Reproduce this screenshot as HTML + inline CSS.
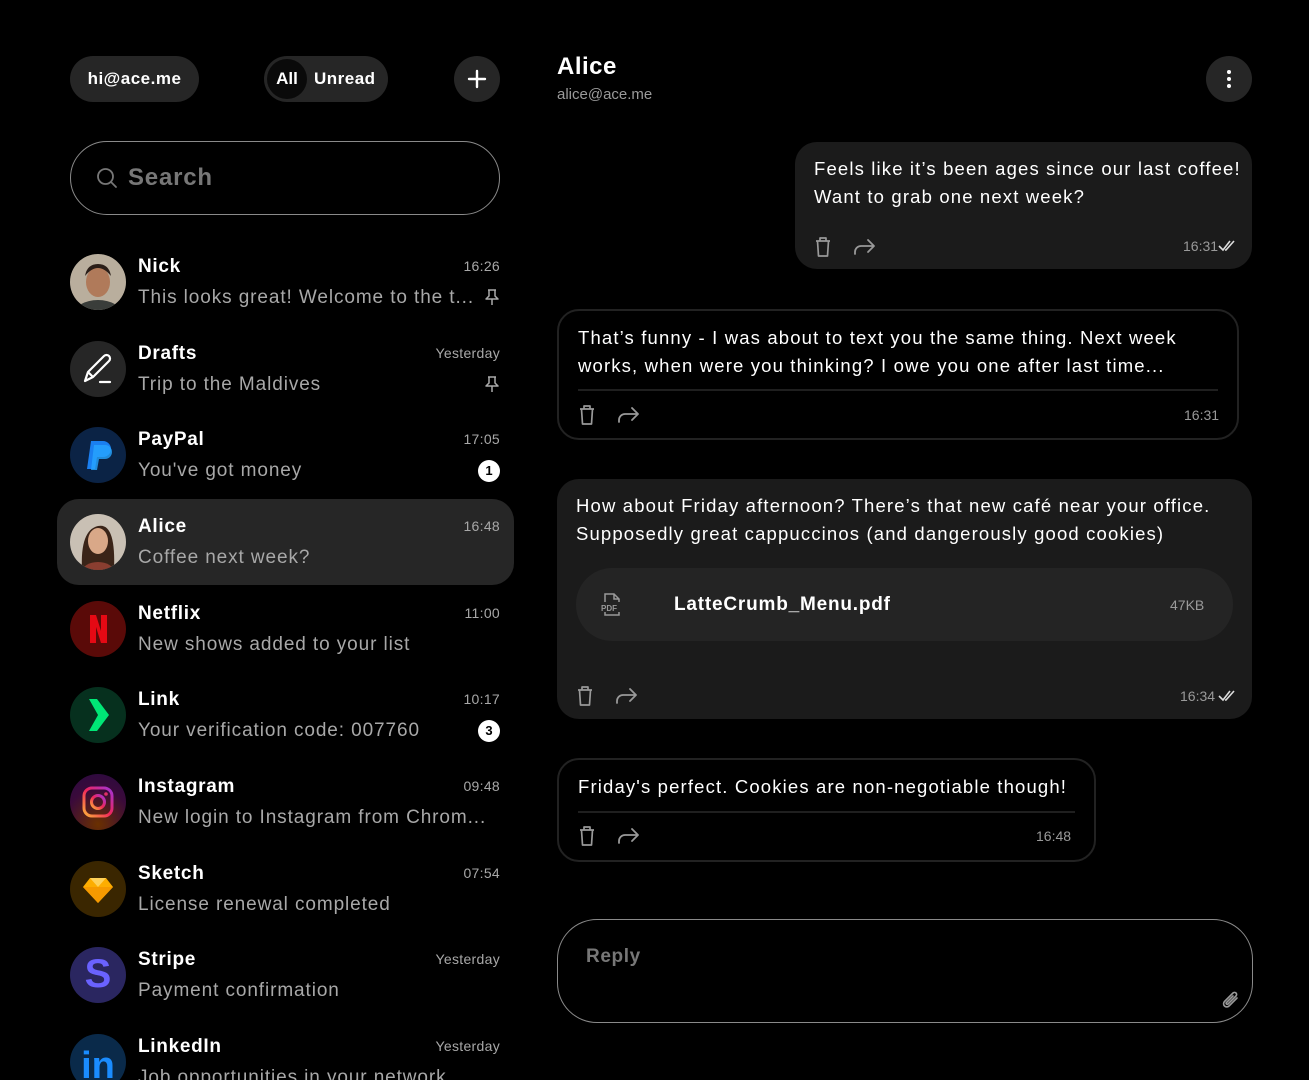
<!DOCTYPE html>
<html style="height:1080px;overflow:hidden"><head><meta charset="utf-8">
<style>
*{margin:0;padding:0;box-sizing:border-box}
body{width:1309px;height:1080px;background:#000;overflow:hidden;position:relative;font-family:"Liberation Sans",sans-serif;color:#fff}
.abs{position:absolute}
.pill{position:absolute;background:#262626;border-radius:23px;height:46px}
.row{position:absolute;left:70px;width:430px;height:60px}
.av{position:absolute;left:0;top:0;width:56px;height:56px;border-radius:50%;overflow:hidden}
.nm{position:absolute;left:68px;top:1px;line-height:24px;font-size:19px;font-weight:bold;color:#fff;letter-spacing:0.7px}
.pv{position:absolute;left:68px;top:32px;line-height:24px;font-size:19px;color:#a8a8a8;white-space:nowrap;letter-spacing:0.9px}
.tm{position:absolute;right:0;top:1px;line-height:22px;font-size:14px;color:#a8a8a8;letter-spacing:0.3px}
.badge{position:absolute;right:0;top:33px;width:22px;height:22px;border-radius:50%;background:#fff;color:#000;font-size:13px;font-weight:bold;text-align:center;line-height:22px}
.pin{position:absolute;right:0;top:34px}
.msg{position:absolute;font-size:18.5px;line-height:28px;color:#fff;letter-spacing:1.15px;white-space:nowrap}
.bub{position:absolute;border-radius:22px}
.ic{position:absolute}
.time{position:absolute;font-size:14px;color:#9a9a9a;line-height:20px}
.div{position:absolute;height:2px;background:#1f1f1f}
</style></head><body>

<div class="pill" style="left:70px;top:56px;width:129px;font-size:17px;font-weight:bold;line-height:46px;text-align:center;letter-spacing:0.5px">hi@ace.me</div>
<div class="pill" style="left:264px;top:56px;width:124px"></div>
<div class="abs" style="left:267px;top:59px;width:40px;height:40px;border-radius:50%;background:#0a0a0a;font-size:17px;font-weight:bold;line-height:40px;text-align:center">All</div>
<div class="abs" style="left:314px;top:56px;font-size:17px;font-weight:bold;line-height:46px;letter-spacing:0.5px">Unread</div>
<div class="pill" style="left:454px;top:56px;width:46px;border-radius:50%"></div>
<svg class="abs" style="left:467px;top:69px" width="20" height="20" viewBox="0 0 20 20"><path d="M10 2v16M2 10h16" stroke="#fff" stroke-width="2.4" stroke-linecap="round"/></svg>

<div class="abs" style="left:70px;top:141px;width:430px;height:74px;border:1.5px solid #8a8a8a;border-radius:37px"></div>
<svg class="abs" style="left:96px;top:167px" width="22" height="22" viewBox="0 0 22 22"><circle cx="9.5" cy="9.5" r="7.5" stroke="#777" stroke-width="1.8" fill="none"/><path d="M15 15l5 5" stroke="#777" stroke-width="1.8" stroke-linecap="round"/></svg>
<div class="abs" style="left:128px;top:162px;font-size:24px;line-height:32px;color:#777;font-weight:bold;letter-spacing:0.8px">Search</div>

<div class="abs" style="left:57px;top:499px;width:457px;height:86px;background:#262626;border-radius:22px"></div>

<div class="row" style="top:254px">
 <div class="av" style="background:#b9ae9d"><svg width="56" height="56"><ellipse cx="28" cy="60" rx="24" ry="14" fill="#3a3d3a"/><ellipse cx="28" cy="28" rx="12" ry="15" fill="#b07a5a"/><path d="M15 22q13-16 26 0q-2-12-13-12t-13 12z" fill="#2a1e18"/></svg></div>
 <div class="nm">Nick</div><div class="pv">This looks great! Welcome to the t...</div><div class="tm">16:26</div>
 <svg class="pin" width="16" height="18" viewBox="0 0 16 18"><path d="M4 2h8M5 2v6l-3 3h12l-3-3V2M8 11v6" stroke="#aaa" stroke-width="1.5" fill="none" stroke-linejoin="round"/></svg>
</div>
<div class="row" style="top:340.7px">
 <div class="av" style="background:#262626"><svg width="56" height="56"><path d="M15 40l3-9 16-16a3.5 3.5 0 0 1 5 5L23 36z M18 31l5 5" stroke="#fff" stroke-width="2.2" fill="none" stroke-linejoin="round"/><path d="M30 41h10" stroke="#fff" stroke-width="2.2" stroke-linecap="round"/></svg></div>
 <div class="nm">Drafts</div><div class="pv">Trip to the Maldives</div><div class="tm">Yesterday</div>
 <svg class="pin" width="16" height="18" viewBox="0 0 16 18"><path d="M4 2h8M5 2v6l-3 3h12l-3-3V2M8 11v6" stroke="#aaa" stroke-width="1.5" fill="none" stroke-linejoin="round"/></svg>
</div>
<div class="row" style="top:427.3px">
 <div class="av" style="background:#0b2345"><svg width="56" height="56"><path d="M21 14h12a8 8 0 0 1 0 16h-6l-2 12h-8z" fill="#1a7ff0"/><path d="M24 18h11a7 7 0 0 1 0 14h-6l-2 11h-6z" fill="#27a5ff" opacity=".8"/></svg></div>
 <div class="nm">PayPal</div><div class="pv">You've got money</div><div class="tm">17:05</div><div class="badge">1</div>
</div>
<div class="row" style="top:514px">
 <div class="av" style="background:#c9c0b4"><svg width="56" height="56"><path d="M12 56q-2-40 16-44t16 44z" fill="#3a2418"/><ellipse cx="28" cy="27" rx="10" ry="13" fill="#d9a888"/><ellipse cx="28" cy="58" rx="16" ry="10" fill="#8a3e30"/></svg></div>
 <div class="nm">Alice</div><div class="pv">Coffee next week?</div><div class="tm">16:48</div>
</div>
<div class="row" style="top:600.7px">
 <div class="av" style="background:#5a0a08"><svg width="56" height="56"><path d="M20 14h6l5 16V14h6v28h-6l-5-16v16h-6z" fill="#e50914"/></svg></div>
 <div class="nm">Netflix</div><div class="pv">New shows added to your list</div><div class="tm">11:00</div>
</div>
<div class="row" style="top:687.3px">
 <div class="av" style="background:#06301e"><svg width="56" height="56"><path d="M19 12h8l12 16-12 16h-8l9-16z" fill="#00e676"/></svg></div>
 <div class="nm">Link</div><div class="pv">Your verification code: 007760</div><div class="tm">10:17</div><div class="badge">3</div>
</div>
<div class="row" style="top:774px">
 <div class="av" style="background:radial-gradient(circle at 50% 90%,#6a3000,#3a0a3a 60%,#2a0a40)"><svg width="56" height="56"><defs><linearGradient id="ig" x1="0" y1="1" x2="1" y2="0"><stop offset="0" stop-color="#fdb13a"/><stop offset=".5" stop-color="#f0265a"/><stop offset="1" stop-color="#a033d8"/></linearGradient></defs><rect x="14" y="14" width="28" height="28" rx="8" stroke="url(#ig)" stroke-width="3" fill="none"/><circle cx="28" cy="28" r="6.5" stroke="url(#ig)" stroke-width="3" fill="none"/><circle cx="36" cy="20" r="1.8" fill="#e0306a"/></svg></div>
 <div class="nm">Instagram</div><div class="pv">New login to Instagram from Chrom...</div><div class="tm">09:48</div>
</div>
<div class="row" style="top:860.7px">
 <div class="av" style="background:#3a2600"><svg width="56" height="56"><path d="M20 17h16l7 9-15 16-15-16z" fill="#fdad00"/><path d="M13 26h30L28 42z" fill="#f69a00"/><path d="M20 17l8 9 8-9" fill="#fed15a"/></svg></div>
 <div class="nm">Sketch</div><div class="pv">License renewal completed</div><div class="tm">07:54</div>
</div>
<div class="row" style="top:947.3px">
 <div class="av" style="background:#2a2660"><div style="position:absolute;left:0;top:5px;width:56px;text-align:center;font-size:40px;font-weight:bold;color:#6a62ff;line-height:44px">S</div></div>
 <div class="nm">Stripe</div><div class="pv">Payment confirmation</div><div class="tm">Yesterday</div>
</div>
<div class="row" style="top:1034px">
 <div class="av" style="background:#0a2a4a"><div style="position:absolute;left:0;top:10px;width:56px;text-align:center;font-size:38px;font-weight:bold;color:#1a8cff;line-height:44px">in</div></div>
 <div class="nm">LinkedIn</div><div class="pv">Job opportunities in your network</div><div class="tm">Yesterday</div>
</div>

<div class="abs" style="left:557px;top:52px;font-size:24px;font-weight:bold;line-height:30px;letter-spacing:0.5px">Alice</div>
<div class="abs" style="left:557px;top:85px;font-size:15px;color:#9a9a9a;line-height:20px">alice@ace.me</div>
<div class="abs" style="left:1206px;top:56px;width:46px;height:46px;border-radius:50%;background:#262626"></div>
<svg class="abs" style="left:1226px;top:69px" width="6" height="20"><circle cx="3" cy="3" r="2" fill="#fff"/><circle cx="3" cy="10" r="2" fill="#fff"/><circle cx="3" cy="17" r="2" fill="#fff"/></svg>

<div class="bub" style="left:795px;top:142px;width:457px;height:127px;background:#1b1b1b"></div>
<div class="msg" style="left:814px;top:155px">Feels like it’s been ages since our last coffee!<br>Want to grab one next week?</div>
<svg class="ic" style="left:814px;top:236px" width="18" height="22" viewBox="0 0 18 22"><path d="M2 5h14M6 5V2h6v3M3.5 5l1 15h9l1-15" stroke="#999" stroke-width="1.7" fill="none" stroke-linejoin="round"/></svg>
<svg class="ic" style="left:853px;top:238px" width="24" height="18" viewBox="0 0 24 18"><path d="M2 16v-2a6 6 0 0 1 6-6h13M15 2l6 6-6 6" stroke="#999" stroke-width="1.8" fill="none" stroke-linecap="round" stroke-linejoin="round"/></svg>
<div class="time" style="left:1183px;top:236px">16:31</div>
<svg class="ic" style="left:1218px;top:240px" width="18" height="12" viewBox="0 0 18 12"><path d="M1 6l4 4 7-9M7 10l1 0 8-9" stroke="#ddd" stroke-width="1.6" fill="none"/></svg>

<div class="bub" style="left:557px;top:309px;width:682px;height:131px;border:2px solid #222"></div>
<div class="msg" style="left:578px;top:324px">That’s funny - I was about to text you the same thing. Next week<br>works, when were you thinking? I owe you one after last time...</div>
<div class="div" style="left:578px;top:389px;width:640px"></div>
<svg class="ic" style="left:578px;top:404px" width="18" height="22" viewBox="0 0 18 22"><path d="M2 5h14M6 5V2h6v3M3.5 5l1 15h9l1-15" stroke="#999" stroke-width="1.7" fill="none" stroke-linejoin="round"/></svg>
<svg class="ic" style="left:617px;top:406px" width="24" height="18" viewBox="0 0 24 18"><path d="M2 16v-2a6 6 0 0 1 6-6h13M15 2l6 6-6 6" stroke="#999" stroke-width="1.8" fill="none" stroke-linecap="round" stroke-linejoin="round"/></svg>
<div class="time" style="left:1184px;top:405px">16:31</div>

<div class="bub" style="left:557px;top:479px;width:695px;height:240px;background:#1b1b1b"></div>
<div class="msg" style="left:576px;top:492px">How about Friday afternoon? There’s that new café near your office.<br>Supposedly great cappuccinos (and dangerously good cookies)</div>
<div class="abs" style="left:576px;top:568px;width:657px;height:73px;background:#242424;border-radius:36px"></div>
<svg class="ic" style="left:600px;top:592px" width="24" height="26" viewBox="0 0 24 26"><path d="M5 10V2h9l5 5v3M14 2v5h5M5 20v3h14v-3" stroke="#999" stroke-width="1.5" fill="none"/><text x="1" y="19" font-size="8" font-family="Liberation Sans" font-weight="bold" fill="#999">PDF</text></svg>
<div class="abs" style="left:674px;top:592px;font-size:19px;font-weight:bold;line-height:26px;letter-spacing:0.8px">LatteCrumb_Menu.pdf</div>
<div class="time" style="left:1170px;top:595px">47KB</div>
<svg class="ic" style="left:576px;top:685px" width="18" height="22" viewBox="0 0 18 22"><path d="M2 5h14M6 5V2h6v3M3.5 5l1 15h9l1-15" stroke="#999" stroke-width="1.7" fill="none" stroke-linejoin="round"/></svg>
<svg class="ic" style="left:615px;top:687px" width="24" height="18" viewBox="0 0 24 18"><path d="M2 16v-2a6 6 0 0 1 6-6h13M15 2l6 6-6 6" stroke="#999" stroke-width="1.8" fill="none" stroke-linecap="round" stroke-linejoin="round"/></svg>
<div class="time" style="left:1180px;top:686px">16:34</div>
<svg class="ic" style="left:1218px;top:690px" width="18" height="12" viewBox="0 0 18 12"><path d="M1 6l4 4 7-9M7 10l1 0 8-9" stroke="#ddd" stroke-width="1.6" fill="none"/></svg>

<div class="bub" style="left:557px;top:758px;width:539px;height:104px;border:2px solid #222"></div>
<div class="msg" style="left:578px;top:773px">Friday's perfect. Cookies are non-negotiable though!</div>
<div class="div" style="left:578px;top:811px;width:497px"></div>
<svg class="ic" style="left:578px;top:825px" width="18" height="22" viewBox="0 0 18 22"><path d="M2 5h14M6 5V2h6v3M3.5 5l1 15h9l1-15" stroke="#999" stroke-width="1.7" fill="none" stroke-linejoin="round"/></svg>
<svg class="ic" style="left:617px;top:827px" width="24" height="18" viewBox="0 0 24 18"><path d="M2 16v-2a6 6 0 0 1 6-6h13M15 2l6 6-6 6" stroke="#999" stroke-width="1.8" fill="none" stroke-linecap="round" stroke-linejoin="round"/></svg>
<div class="time" style="left:1036px;top:826px">16:48</div>

<div class="abs" style="left:557px;top:919px;width:696px;height:104px;border:1.5px solid #8a8a8a;border-radius:40px"></div>
<div class="abs" style="left:586px;top:944px;font-size:19px;color:#777;line-height:26px;font-weight:bold;letter-spacing:0.6px">Reply</div>
<svg class="ic" style="left:1218px;top:989px" width="24" height="24" viewBox="0 0 24 24"><path d="M19 9l-8 8a3 3 0 0 1-4.5-4.5L15 4a2 2 0 0 1 3 3l-8 8a1 1 0 0 1-1.5-1.5L15 7" stroke="#999" stroke-width="1.6" fill="none" stroke-linecap="round"/></svg>

</body></html>
